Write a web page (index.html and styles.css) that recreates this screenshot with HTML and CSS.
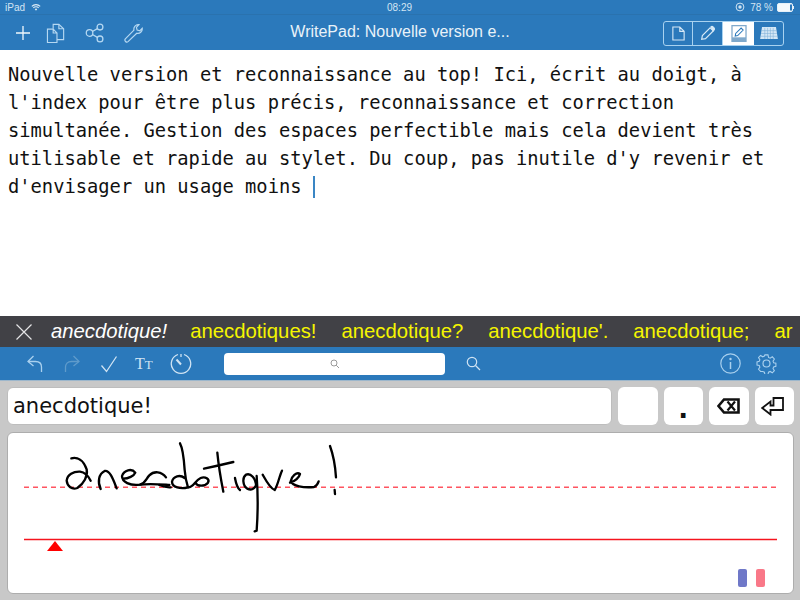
FILE: index.html
```html
<!DOCTYPE html>
<html lang="fr">
<head>
<meta charset="utf-8">
<title>WritePad</title>
<link rel="stylesheet" href="styles.css">
</head>
<body>
<div class="app">
  <header class="top">
    <div class="status">
      <div class="status-left">iPad
        <svg class="wifi" width="10" height="9" viewBox="0 0 12 10"><path d="M1 3.600a7 7 0 0 1 10 0M2.800 5.400a4.500 4.500 0 0 1 6.400 0" fill="none" stroke="#dcebf6" stroke-width="1.400"/><path d="M4.400 6.900 6 8.800l1.600-1.900a2.300 2.300 0 0 0-3.200 0z" fill="#dcebf6"/></svg>
      </div>
      <div>08:29</div>
      <div class="status-right">
        <svg width="10" height="10" viewBox="0 0 10 10"><circle cx="5" cy="5" r="3.900" fill="none" stroke="#cfe3f3"/><circle cx="5" cy="5" r="1.700" fill="#cfe3f3"/></svg>
        <span class="pct">78 %</span>
        <svg width="17" height="9" viewBox="0 0 17 9"><rect x=".5" y=".5" width="15" height="8" rx="1.500" fill="#f4f9fc" stroke="#e5f0f8"/><rect x="13" y="1.500" width="2" height="6" fill="#2b79bb"/><rect x="16" y="3" width="1" height="3" fill="#e5f0f8"/></svg>
      </div>
    </div>
    <div class="nav">
      <div class="nav-tools">
        <svg class="ic-plus" width="14" height="14" viewBox="0 0 14 14"><path d="M7 0v14M0 7h14" stroke="#f0f7fc" stroke-width="1.300" fill="none"/></svg>
        <svg class="ic-docs" width="21" height="20" viewBox="0 0 22 21" fill="none" stroke="#b5d8f2" stroke-width="1.200"><path d="M1.500 6.500h6l4 4v10h-10zM7.500 6.500v4h4"/><path d="M7.500 6V1.500h6l5 4.500v11.500h-7"/><path d="M13.500 1.500v4.500h5"/></svg>
        <svg class="ic-share" width="20" height="20" viewBox="0 0 22 22" fill="none" stroke="#b5d8f2" stroke-width="1.400"><circle cx="5" cy="11" r="3.600"/><circle cx="16.500" cy="4.500" r="3.200"/><circle cx="16.500" cy="17.500" r="3.200"/><path d="M8.200 9.300 13.600 6.200M8.200 12.700l5.400 3.100"/></svg>
        <svg class="ic-wrench" width="21" height="20" viewBox="0 0 22 22" fill="none" stroke="#b5d8f2" stroke-width="1.300"><path d="M2 17.500 11.500 7.800C10.800 4.500 13.500 1.200 17 1.800l-2.800 3 .8 3 3 .7 2.600-2.700c.5 3.600-2.800 6.300-6 5.500L5 20.500c-1.800 1.500-4.500-1-3-3z"/></svg>
      </div>
      <div class="title">WritePad: Nouvelle version e...</div>
      <div class="seg">
        <div class="seg-item">
          <svg width="13" height="15" viewBox="0 0 15 17" fill="none" stroke="#d5e8f6" stroke-width="1.300"><path d="M1 1h8l5 5v10H1zM9 1v5h5"/></svg>
        </div>
        <div class="seg-item">
          <svg width="16" height="16" viewBox="0 0 19 19" fill="none" stroke="#d5e8f6" stroke-width="1.400"><path d="M2 17l.8-4.500L12 3.300l3.700 3.700-9.200 9.200z"/><path d="M13 2.300a1.800 1.800 0 0 1 2.500 0l1.200 1.200a1.800 1.800 0 0 1 0 2.500L15.700 7z" fill="#d5e8f6"/></svg>
        </div>
        <div class="seg-item seg-active">
          <svg width="16" height="17" viewBox="0 0 18 20"><rect x="0" y="0" width="18" height="20" fill="#7fa9cc"/><rect x="1.500" y="1.500" width="15" height="13" fill="#fff"/><path d="M4.500 13l.6-3 6.400-6.400 2.400 2.400-6.400 6.400z" fill="#fff" stroke="#2b79bb" stroke-width="1.200"/></svg>
        </div>
        <div class="seg-item">
          <svg width="18" height="14" viewBox="0 0 19 15"><path d="M2 1h15l2 13H0z" fill="#d5e8f6"/><path d="M1 5h17M.8 8h17.400M.5 11h18M5 2v12M8 2v12M11 2v12M14 2v12" stroke="#7fb0d8" stroke-width=".6"/></svg>
        </div>
      </div>
    </div>
  </header>

  <main class="editor">
    <p class="doc">Nouvelle version et reconnaissance au top! Ici, écrit au doigt, à l'index pour être plus précis, reconnaissance et correction simultanée. Gestion des espaces perfectible mais cela devient très utilisable et rapide au stylet. Du coup, pas inutile d'y revenir et d'envisager un usage moins <span class="caret"></span></p>
  </main>

  <div class="suggest">
    <svg class="close" width="16" height="16" viewBox="0 0 16 16"><path d="M.5.5l15 15M15.500.5l-15 15" stroke="#e4e4e6" stroke-width="1.200"/></svg>
    <span class="sug-main">anecdotique!</span>
    <span class="sug">anecdotiques!</span>
    <span class="sug">anecdotique?</span>
    <span class="sug">anecdotique'.</span>
    <span class="sug">anecdotique;</span>
    <span class="sug">ar</span>
  </div>

  <div class="tools">
    <div class="tools-left">
      <svg width="18" height="20" viewBox="0 0 18 20" fill="none" stroke="#a9d0ee" stroke-width="1.300"><path d="M7.500 2 2 7.500 7.500 12"/><path d="M2 7.500h7.500c4 0 6 2.500 6 5.500v5"/></svg>
      <svg class="redo" width="18" height="20" viewBox="0 0 18 20" fill="none" stroke="#5f9bcb" stroke-width="1.300"><path d="M10.500 2 16 7.500 10.500 12"/><path d="M16 7.500H8.500c-4 0-6 2.500-6 5.500v5"/></svg>
      <svg class="check" width="18" height="18" viewBox="0 0 18 18" fill="none" stroke="#cfe3f3" stroke-width="1.300"><path d="M1.500 10.500 6.500 16.500 16.500 1.500"/></svg>
      <div class="tt"><span class="tt-big">T</span><span class="tt-small">T</span></div>
      <svg class="clock" width="22" height="22" viewBox="0 0 22 22" fill="none" stroke="#cfe3f3" stroke-width="1.300"><path d="M8 1.500a9.700 9.700 0 1 0 6 0"/><path d="M11 1v3"/><path d="M6.500 6.500 11 11.500" stroke-width="2"/></svg>
    </div>
    <div class="search-box">
      <svg width="10" height="10" viewBox="0 0 10 10" fill="none" stroke="#9a9a9a"><circle cx="4" cy="4" r="3"/><path d="M6.200 6.200 9 9"/></svg>
    </div>
    <svg class="search-go" width="15" height="15" viewBox="0 0 15 15" fill="none" stroke="#cfe3f3" stroke-width="1.200"><circle cx="6" cy="6" r="4.700"/><path d="M9.500 9.500 14 14"/></svg>
    <div class="tools-right">
      <svg width="21" height="21" viewBox="0 0 21 21" fill="none" stroke="#a9d0ee" stroke-width="1.200"><circle cx="10.500" cy="10.500" r="9.700"/><path d="M10.500 9v7" stroke-width="1.500"/><circle cx="10.500" cy="6" r=".6" fill="#a9d0ee"/></svg>
      <svg width="21" height="21" viewBox="0 0 21 21" fill="none" stroke="#a9d0ee" stroke-width="1.200"><circle cx="10.500" cy="10.500" r="3.500"/><path d="M8.800 1h3.400l.6 2.800 1.800.8 2.400-1.500 2.300 2.400-1.500 2.400.7 1.800 2.500.6v3.400l-2.500.6-.7 1.800 1.500 2.400-2.300 2.400-2.400-1.500-1.800.8-.6 2.500H8.800l-.6-2.500-1.800-.8L4 19.400l-2.300-2.400 1.500-2.400-.7-1.800-2.500-.6V8.800l2.500-.6.700-1.800L1.700 4 4 1.600l2.400 1.500 1.800-.8z" transform="translate(1 1) scale(.9)"/></svg>
    </div>
  </div>

  <div class="pad">
    <div class="input-row">
      <div class="word">anecdotique!</div>
      <div class="key"></div>
      <div class="key key-dot">.</div>
      <div class="key">
        <svg width="23" height="16" viewBox="0 0 23 16"><path d="M7 1.500H21.500V14.500H7L1.500 8z" fill="none" stroke="#111" stroke-width="2.600"/><path d="M10.500 3.500l7.500 9M18 3.500l-7.500 9" stroke="#111" stroke-width="2.200"/></svg>
      </div>
      <div class="key">
        <svg class="return" width="23" height="19" viewBox="0 0 23 19"><path d="M12.500 1H22V13H9.500V17.500L1.200 11 9.500 4.500V8.500H12.500z" fill="none" stroke="#111" stroke-width="1.800"/></svg>
      </div>
    </div>
    <div class="canvas">
      <svg class="ink" viewBox="0 0 787 162" width="787" height="162">
        <path d="M17 55.250H770" stroke="#ff5560" stroke-width="1.500" stroke-dasharray="5 4" fill="none"/>
        <path d="M17 107.500H770" stroke="#f5141e" stroke-width="1.500" fill="none"/>
        <path d="M40 119l8-10 8 10z" fill="#f00"/>
        <g class="stroke" transform="translate(53 8) scale(.3333)">
          <path d="M34 55C52 50 70 60 80 88C84 108 72 130 52 144C36 150 22 140 20 122C22 104 40 94 60 95C74 97 84 106 92 122"/>
          <path d="M122 147C112 125 116 102 134 93C150 90 160 120 170 145"/>
          <path d="M190 116C205 116 222 108 226 98C215 84 192 90 186 108C186 126 210 138 240 134C256 130 258 116 268 106C282 92 305 94 318 112"/>
          <path d="M240 134C270 130 300 133 328 135"/>
        </g>
        <g class="stroke" transform="translate(153 8) scale(.3333)">
          <path d="M-2 135C10 140 22 143 32 142"/>
          <path d="M60 10C70 28 72 60 74 90C76 115 80 130 84 142C62 148 36 142 36 125C40 108 60 103 74 114"/>
          <path d="M84 142C102 142 104 122 122 114C136 108 150 118 144 128C134 140 112 140 106 128"/>
          <path d="M172 38C176 80 184 125 190 155"/>
          <path d="M132 86C160 80 195 72 220 66"/>
          <path d="M225 114C228 130 230 142 240 150"/>
        </g>
        <g class="stroke" transform="translate(233 8) scale(.3333)">
          <path d="M48 138C48 115 32 98 18 104C6 112 8 138 22 146C34 152 44 146 48 136"/>
          <path d="M50 108C54 160 53 230 50 272L44 274"/>
          <path d="M68 104C78 122 90 145 104 150C114 135 118 108 126 92"/>
          <path d="M150 128C165 125 178 112 180 102C170 94 154 110 152 124C158 138 190 144 222 141C230 138 234 130 236 124"/>
          <path d="M270 18C280 45 286 80 288 112"/>
          <path d="M284 150 285 162"/>
        </g>
      </svg>
      <div class="flag">
        <span class="flag-blue"></span>
        <span class="flag-white"></span>
        <span class="flag-red"></span>
      </div>
    </div>
  </div>
</div>
</body>
</html>
```
FILE: styles.css
```css
* { box-sizing: border-box; }
html, body { margin: 0; padding: 0; }
body { width: 800px; height: 600px; overflow: hidden; background: #fff; font-family: "Liberation Sans", Arial, sans-serif; }
.app { display: flex; flex-direction: column; height: 600px; }
svg { display: block; flex: none; }

.top { background: #2b79bb; height: 50px; flex: none; }
.status { height: 15px; display: grid; grid-template-columns: 1fr auto 1fr; align-items: center; padding: 0 6px 0 5px; font-size: 10px; color: #d3e5f3; border-bottom: 1px solid #2a72ae; }
.status-left { display: flex; align-items: center; gap: 6px; }
.status-right { display: flex; align-items: center; justify-content: flex-end; gap: 4px; }
.pct { margin-left: 1px; }

.nav { height: 35px; display: grid; grid-template-columns: 1fr auto 1fr; align-items: center; padding: 1px 16px 0 16px; }
.nav-tools { display: flex; align-items: center; }
.ic-docs { margin-left: 16px; }
.ic-share { margin-left: 18px; }
.ic-wrench { margin-left: 18px; }
.title { color: #e9f2f9; font-size: 16px; white-space: nowrap; margin-bottom: 2px; }
.seg { justify-self: end; width: 121px; height: 25px; border: 1px solid #a8d2f0; border-radius: 3px; display: grid; grid-template-columns: 29px 30px 31px 1fr; overflow: hidden; }
.seg-item { display: flex; align-items: center; justify-content: center; border-right: 1px solid #a8d2f0; }
.seg-item:last-child, .seg-active { border-right: 0; }
.seg-active { background: #fff; }

.editor { flex: none; height: 266px; background: #fff; padding: 11px 8px 0; }
.doc { margin: 0; width: 770px; font-family: "DejaVu Sans Mono", monospace; font-size: 18.75px; line-height: 28px; color: #111; }
.caret { display: inline-block; width: 2.5px; height: 22px; background: #3a86c4; vertical-align: -5px; }

.suggest { flex: none; height: 31px; background: #414146; display: flex; align-items: center; padding-left: 16px; gap: 25px; font-size: 20.3px; color: #f5f500; white-space: nowrap; overflow: hidden; }
.close { margin-right: -6px; }
.sug-main { color: #fff; font-style: italic; margin-right: -2px; }

.tools { flex: none; height: 34px; background: #2b79bb; border-bottom: 1px solid #9db7cc; display: flex; align-items: center; padding: 0 23px 0 26px; }
.tools-left { display: flex; align-items: center; width: 198px; }
.redo { margin-left: 19px; }
.check { margin-left: 19px; }
.tt { margin-left: 17px; width: 24px; font-family: "Liberation Serif", serif; color: #cfe3f3; display: flex; align-items: baseline; }
.tt-big { font-size: 16px; }
.tt-small { font-size: 13px; }
.clock { margin-left: 11px; }
.search-box { width: 221px; height: 22px; background: #fff; border-radius: 4px; display: flex; align-items: center; justify-content: center; }
.search-go { margin-left: 21px; }
.tools-right { margin-left: auto; display: flex; align-items: center; gap: 15px; }

.pad { flex: 1; background: #c8c8c8; padding: 6px 6px 6px 7px; display: flex; flex-direction: column; gap: 7px; }
.input-row { display: flex; height: 38px; gap: 6px; }
.word { flex: none; width: 605px; background: #fff; border-radius: 6px; border: 1px solid #bdbdbd; padding-left: 5px; font-family: "DejaVu Sans", sans-serif; font-size: 21px; line-height: 37px; color: #111; }
.key { width: 39.5px; flex: none; background: #fff; border-radius: 6px; display: flex; align-items: center; justify-content: center; }
.key-dot { font-family: "DejaVu Sans", sans-serif; font-weight: 700; font-size: 26px; color: #111; padding-top: 5px; }
.return { margin-right: 3px; }

.canvas { position: relative; flex: 1; background: #fff; border-radius: 6px; border: 1px solid #adadad; overflow: hidden; }
.ink { position: absolute; left: -1px; top: -1px; }
.stroke path { fill: none; stroke: #000; stroke-width: 7; stroke-linecap: round; stroke-linejoin: round; }
.flag { position: absolute; right: 28px; bottom: 6px; display: flex; }
.flag span { width: 9px; height: 18px; border-radius: 2px; }
.flag-blue { background: #6f78c8; }
.flag-white { background: #fff; }
.flag-red { background: #f97888; }
```
